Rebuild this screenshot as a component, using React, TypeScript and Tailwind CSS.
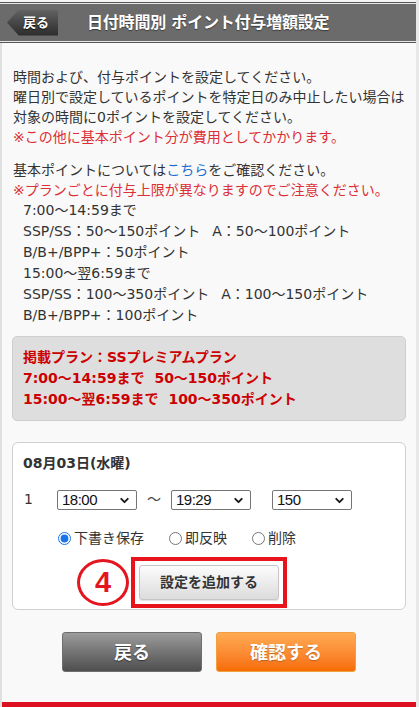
import { ChevronDown } from 'lucide-react';

const times = ['18:00', '18:30', '19:00'];

function TimeSelect({ value, options }: { value: string; options: string[] }) {
  return (
    <div className="relative w-[80px] h-[20px]">
      <select
        defaultValue={value}
        className="appearance-none w-full h-full bg-white border border-[#767676] rounded-[2px] pl-[4px] text-[15px] tracking-[-0.5px] leading-[18px] text-[#111] font-['Liberation_Sans',Arial,sans-serif] outline-none"
      >
        {options.map((o) => (
          <option key={o} value={o}>
            {o}
          </option>
        ))}
      </select>
      <ChevronDown
        size={13}
        strokeWidth={3.5}
        className="pointer-events-none absolute right-[6px] top-[4px] text-[#1a1a1a]"
      />
    </div>
  );
}

function Radio({ label, checked }: { label: string; checked?: boolean }) {
  return (
    <label className="flex items-center gap-[3px] text-[14px] leading-[20px] text-[#333]">
      <input
        type="radio"
        name="status"
        defaultChecked={checked}
        className="m-0 w-[13px] h-[13px] accent-[#1a73e8]"
      />
      {label}
    </label>
  );
}

export default function App() {
  return (
    <div className="w-[419px] min-h-[707px] bg-[#e8e8e8] font-['DejaVu_Sans','Noto_Sans_CJK_JP',sans-serif]">
      <div className="w-[416px] min-h-[707px] bg-[#f9f9f9] flex flex-col">
        {/* Header */}
        <div className="pt-[2px] bg-[#f4f4f4]">
          <div className="border-y border-[#555]">
            <div className="border-y border-[#e8e8e8] bg-[#6b6b6b] h-[39px] flex items-center">
              <button className="ml-[7px] w-[51px] h-[26px] bg-linear-to-b from-[#626262] to-[#2c2c2c] [clip-path:polygon(0_50%,23%_0,100%_0,100%_100%,23%_100%)] flex items-center justify-end pr-[9px] text-white text-[13px] font-bold [text-shadow:0_1px_1px_rgba(0,0,0,0.8)]">
                戻る
              </button>
              <h1 className="ml-[29px] text-white text-[16px] font-bold tracking-[-0.2px] [text-shadow:0_1px_1px_rgba(0,0,0,0.45)]">
                日付時間別 ポイント付与増額設定
              </h1>
            </div>
          </div>
        </div>

        {/* Body */}
        <div className="flex-1 border-l-2 border-[#e0e0e0]">
          <div className="pl-[11px] pt-[24px] text-[14px] text-[#333] whitespace-nowrap">
            <div className="leading-[20px]">
              <div>時間および、付与ポイントを設定してください。</div>
              <div>曜日別で設定しているポイントを特定日のみ中止したい場合は</div>
              <div>対象の時間に0ポイントを設定してください。</div>
              <div className="text-[#dc2f35]">※この他に基本ポイント分が費用としてかかります。</div>
            </div>
            <div className="mt-[13px] leading-[20px]">
              <div>
                基本ポイントについては<a className="text-[#1f6fd1]">こちら</a>をご確認ください。
              </div>
              <div className="text-[#dc2f35]">※プランごとに付与上限が異なりますのでご注意ください。</div>
            </div>
            <div className="pl-[10px] leading-[21px]">
              <div>7:00～14:59まで</div>
              <div>
                SSP/SS：50～150ポイント<span className="inline-block w-[12px]" />A：50～100ポイント
              </div>
              <div>B/B+/BPP+：50ポイント</div>
              <div>15:00～翌6:59まで</div>
              <div>
                SSP/SS：100～350ポイント<span className="inline-block w-[12px]" />A：100～150ポイント
              </div>
              <div>B/B+/BPP+：100ポイント</div>
            </div>
          </div>

          <div className="px-[10px]">
            {/* Plan box */}
            <div className="mt-[10px] bg-[#dedede] border border-[#cfcfcf] rounded-[5px] pl-[10px] py-[10px] text-[14px] leading-[21px] font-bold text-[#cc0000] whitespace-nowrap">
              <div>掲載プラン：SSプレミアムプラン</div>
              <div>
                7:00～14:59まで<span className="inline-block w-[10px]" />50～150ポイント
              </div>
              <div>
                15:00～翌6:59まで<span className="inline-block w-[10px]" />100～350ポイント
              </div>
            </div>

            {/* Setting card */}
            <div className="mt-[21px] bg-white border border-[#d0d0d0] rounded-[6px] pl-[10px] pt-[10px] pb-[1px]">
              <div className="text-[14px] leading-[20px] font-bold text-[#333]">08月03日(水曜)</div>

              <div className="mt-[16px] flex items-center text-[14px] text-[#333]">
                <span className="w-[34px] pl-[1px]">1</span>
                <TimeSelect value="18:00" options={times} />
                <span className="w-[34px] text-center text-[#444]">～</span>
                <TimeSelect value="19:29" options={['19:00', '19:29', '19:59']} />
                <div className="ml-[21px]">
                  <TimeSelect value="150" options={['50', '100', '150']} />
                </div>
              </div>

              <div className="mt-[18px] ml-[35px] flex items-center gap-[25px]">
                <Radio label="下書き保存" checked />
                <Radio label="即反映" />
                <Radio label="削除" />
              </div>

              <div className="mt-[9px] ml-[54px] flex items-center gap-[2px]">
                <div className="w-[52px] h-[47px] rounded-[50%] border-[3px] border-[#e3161f] flex items-center justify-center text-[#e3161f] text-[29px] font-bold font-['Liberation_Sans',Arial,sans-serif]">
                  4
                </div>
                <div className="border-[4px] border-[#e8141c] p-[4px]">
                  <button className="w-[140px] h-[35px] rounded-[3px] border border-[#c6c6c6] bg-linear-to-b from-[#fcfcfc] to-[#dcdcdc] text-[14px] font-bold text-[#333] shadow-[0_1px_1px_rgba(0,0,0,0.12)]">
                    設定を追加する
                  </button>
                </div>
              </div>
            </div>
          </div>

          {/* Bottom buttons */}
          <div className="mt-[22px] flex justify-center gap-[14px]">
            <button className="w-[140px] h-[40px] rounded-[3px] border border-[#6e6e6e] bg-linear-to-b from-[#9c9c9c] to-[#4f4f4f] text-white text-[18px] font-bold [text-shadow:0_1px_1px_rgba(0,0,0,0.5)]">
              戻る
            </button>
            <button className="w-[140px] h-[40px] rounded-[3px] border border-[#f0a040] bg-linear-to-b from-[#ffab52] to-[#f66c00] text-white text-[18px] font-bold [text-shadow:0_1px_1px_rgba(0,0,0,0.25)]">
              確認する
            </button>
          </div>

          <div className="mt-[30px] h-[6px] bg-[#dc1020]" />
        </div>
      </div>
    </div>
  );
}
